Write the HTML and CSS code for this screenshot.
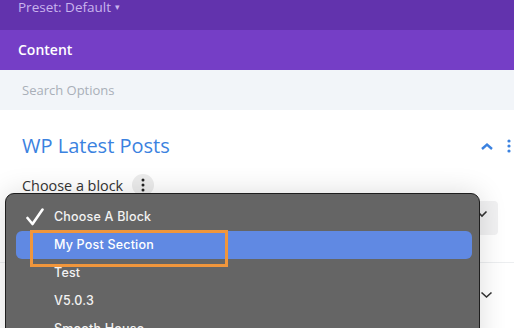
FILE: index.html
```html
<!DOCTYPE html>
<html lang="en">
<head>
    <meta charset="UTF-8">
    <meta name="viewport" content="width=device-width, initial-scale=1.0">
    <title>WP Latest Posts - Content</title>
    <link rel="stylesheet" href="styles.css">
</head>
<body>
    <div class="panel">
        <div class="preset-bar">Preset: Default <span class="caret">&#9662;</span></div>
        <div class="tab-bar">Content</div>
        <div class="search-bar">Search Options</div>

        <div class="module">
            <div class="module-head">
                <h2 class="module-title">WP Latest Posts</h2>
                <div class="head-icons">
                    <svg class="chev-up" width="14" height="9" viewBox="0 0 14 9"><path d="M2 7 L7 2.5 L12 7" fill="none" stroke="#3b82e0" stroke-width="2.4"/></svg>
                    <svg class="kebab-blue" width="4" height="14" viewBox="0 0 4 14"><circle cx="2" cy="2" r="1.6" fill="#3b82e0"/><circle cx="2" cy="7" r="1.6" fill="#3b82e0"/><circle cx="2" cy="12" r="1.6" fill="#3b82e0"/></svg>
                </div>
            </div>

            <div class="field-label">
                <span>Choose a block</span>
                <span class="kebab-btn">
                    <svg width="4" height="14" viewBox="0 0 4 14"><circle cx="2" cy="2" r="1.5" fill="#222"/><circle cx="2" cy="7" r="1.5" fill="#222"/><circle cx="2" cy="12" r="1.5" fill="#222"/></svg>
                </span>
            </div>
            <div class="select-field">
                <svg width="12" height="8" viewBox="0 0 12 8"><path d="M1.5 1.5 L6 6 L10.5 1.5" fill="none" stroke="#333" stroke-width="1.6"/></svg>
            </div>
        </div>

        <div class="toggle-row">
            <svg width="13" height="8" viewBox="0 0 13 8"><path d="M1.5 1.5 L6.5 6 L11.5 1.5" fill="none" stroke="#333" stroke-width="1.6"/></svg>
        </div>
    </div>

    <div class="dropdown">
        <ul class="options">
            <li class="option">
                <svg class="check" width="18" height="18" viewBox="0 0 18 18"><path d="M1.5 10 L6.5 16 L16.5 1.5" fill="none" stroke="#fff" stroke-width="2.6" stroke-linecap="round" stroke-linejoin="round"/></svg>
                Choose A Block
            </li>
            <li class="option selected">My Post Section</li>
            <li class="option">Test</li>
            <li class="option">V5.0.3</li>
            <li class="option">Smooth House</li>
        </ul>
        <div class="highlight-box"></div>
    </div>
</body>
</html>
```

FILE: styles.css
```css
body { margin: 0; width: 514px; height: 328px; overflow: hidden; position: relative; font-family: "Open Sans", sans-serif; background: #fff; }
.panel { width: 100%; }
.preset-bar { height: 30px; background: #6233ad; color: #c9b4ee; font-size: 13.5px; line-height: 14px; padding-left: 18px; box-sizing: border-box; }
.caret { font-size: 9px; position: relative; top: -2px; }
.tab-bar { height: 40px; background: #753ec6; color: #fff; font-size: 14px; font-weight: 600; line-height: 40px; padding-left: 18px; }
.search-bar { height: 40px; background: #f2f5f9; color: #a9afb8; font-size: 13px; line-height: 40px; padding-left: 22px; }

.module { padding: 0 19px 0 22px; }
.module-head { display: flex; align-items: center; justify-content: space-between; margin-top: 25px; height: 22px; }
.module-title { margin: 0; font-size: 20px; font-weight: 400; color: #3b82e0; line-height: 22px; }
.head-icons { display: flex; align-items: center; gap: 13px; margin-right: -16px; }
.chev-up { margin-top: 1px; }

.field-label { display: flex; align-items: center; gap: 9px; margin-top: 18px; font-size: 14.4px; font-weight: 500; color: #333; height: 20px; }
.kebab-btn { width: 22px; height: 22px; border-radius: 50%; background: #ececec; display: flex; align-items: center; justify-content: center; margin-left: 0; }

.select-field { margin-top: 6px; height: 34px; background: #f1f1f2; border-radius: 4px; margin-right: -3px; display: flex; justify-content: flex-end; padding: 9px 10px 0 0; box-sizing: border-box; }

.toggle-row { margin-top: 27px; border-top: 1px solid #eceef0; height: 64px; display: flex; justify-content: flex-end; align-items: center; padding-right: 21px; }

.dropdown { position: absolute; left: 5px; top: 193px; width: 473px; height: 160px; background: #656565; border: 1px solid #1e1e1e; border-radius: 9px; box-shadow: 0 0 28px rgba(0, 0, 0, 0.14); }
.options { list-style: none; margin: 0; padding: 9px 7px 0 10px; font-family: Inter, "Liberation Sans", sans-serif; font-size: 12.5px; font-weight: 500; color: #f2f2f2; }
.option { height: 28px; line-height: 28px; padding-left: 38px; position: relative; border-radius: 6px; letter-spacing: 0.2px; }
.option.selected { background: #6089e3; color: #fff; }
.check { position: absolute; left: 10px; top: 5px; }
.highlight-box { position: absolute; left: 24px; top: 36px; width: 192px; height: 31px; border: 3px solid #f0963c; }
```
